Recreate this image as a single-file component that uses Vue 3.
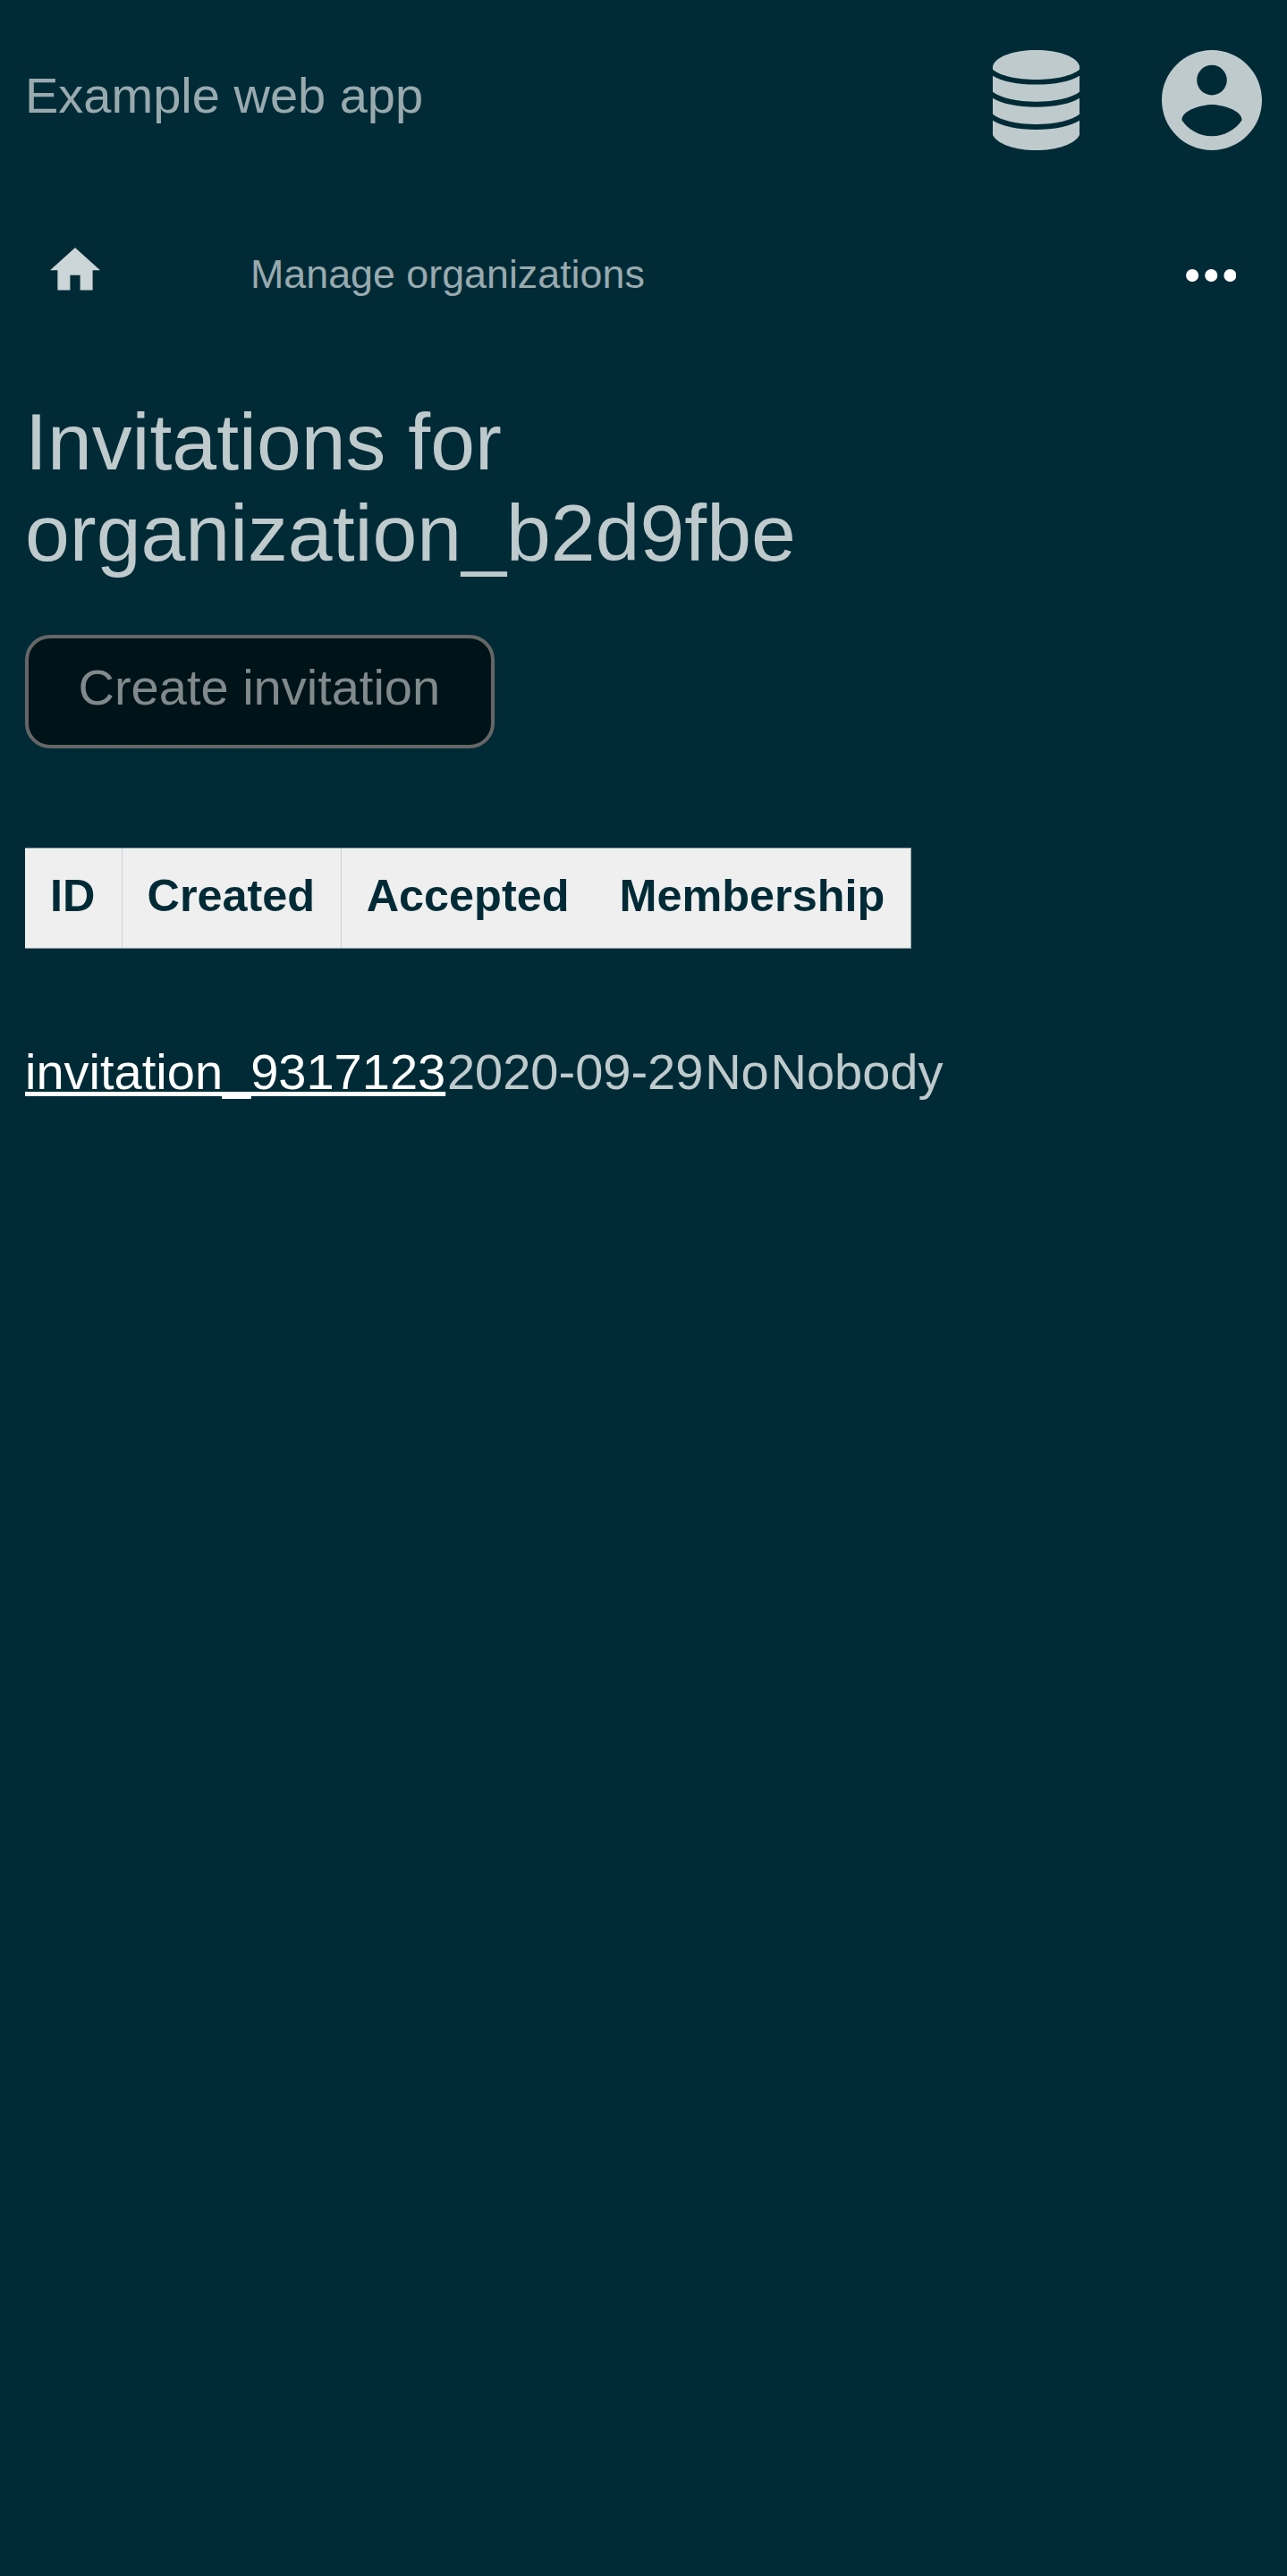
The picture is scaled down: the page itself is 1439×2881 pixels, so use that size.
<script setup>
const columns = ['ID', 'Created', 'Accepted', 'Membership']
const invitations = [
  { id: 'invitation_9317123', created: '2020-09-29', accepted: 'No', membership: 'Nobody' },
]
</script>

<template>
  <div class="page">
    <header class="top">
      <span class="brand">Example web app</span>
      <svg class="database" viewBox="0 0 97 112" aria-label="Administration">
        <path d="M0 18C3 7 24 0 48.500 0S94 7 97 18v3.700C89 28.500 70 33 48.500 33S8 28.500 0 21.700z" />
        <path d="M0 28.700C10 35 28 38.600 48.500 38.600S87 35 97 28.700v18.100C88 53.500 70 57.800 48.500 57.800S9 53.500 0 46.800z" />
        <path d="M0 53.700C10 60 28 63.700 48.500 63.700S87 60 97 53.700v18C88 78.500 70 83 48.500 83S9 78.500 0 71.700z" />
        <path d="M0 78.700C10 85 28 89 48.500 89S87 85 97 78.700v16.200C92 105 72 112 48.500 112S5 105 0 94.900z" />
      </svg>
      <svg class="account" viewBox="2 2 20 20" aria-label="Account">
        <path d="M12 2C6.480 2 2 6.480 2 12s4.480 10 10 10 10-4.480 10-10S17.520 2 12 2zm0 3c1.660 0 3 1.340 3 3s-1.340 3-3 3-3-1.340-3-3 1.340-3 3-3zm0 14.200c-2.500 0-4.710-1.280-6-3.220.030-1.990 4-3.080 6-3.080 1.990 0 5.970 1.090 6 3.080-1.290 1.940-3.500 3.220-6 3.220z" />
      </svg>
    </header>

    <nav class="nav">
      <svg class="home" viewBox="2 3 20 17" aria-label="Home">
        <path d="M10 20v-6h4v6h5v-8h3L12 3 2 12h3v8z" />
      </svg>
      <span class="crumb">Manage organizations</span>
      <svg class="more" viewBox="4 10 16 4" aria-label="More">
        <circle cx="6" cy="12" r="2" /><circle cx="12" cy="12" r="2" /><circle cx="18" cy="12" r="2" />
      </svg>
    </nav>

    <main>
      <h1>Invitations for<br />organization_b2d9fbe</h1>
      <button type="button">Create invitation</button>
      <div class="thead">
        <div v-for="name in columns" :key="name" class="th">{{ name }}</div>
      </div>
      <div v-for="item in invitations" :key="item.id" class="row">
        <a>{{ item.id }}</a>
        <span>{{ item.created }}</span>
        <span>{{ item.accepted }}</span>
        <span>{{ item.membership }}</span>
      </div>
    </main>
  </div>
</template>

<style>
body {
  margin: 0;
  background: #002b36;
}
</style>

<style scoped>
.page {
  box-sizing: border-box;
  min-height: 2881px;
  padding: 56px 28px 0;
  background: #002b36;
  color: #bfcacd;
  font-family: "Liberation Sans", Arial, sans-serif;
  font-size: 56px;
  line-height: 64px;
}
svg {
  display: block;
  fill: #bfcacd;
}
.top {
  display: flex;
  height: 112px;
}
.brand {
  flex: 1;
  margin-top: 19px;
  color: #99aaaf;
}
.database {
  width: 97px;
  height: 112px;
  margin-right: 92px;
}
.account {
  width: 112px;
  height: 112px;
}
.nav {
  display: flex;
  align-items: flex-start;
  height: 112px;
  margin-top: 84px;
  padding: 0 29px 0 28px;
}
.home {
  width: 56px;
  height: 47.6px;
  margin-top: 25px;
  fill: #ccd5d7;
}
.crumb {
  flex: 1;
  margin: 28px 0 0 168px;
  color: #99aaaf;
  font-size: 44.8px;
  line-height: 52px;
}
.more {
  width: 56.5px;
  height: 14.1px;
  margin-top: 49px;
  fill: #fff;
}
h1 {
  margin: 79px 0 0;
  font-size: 89.6px;
  font-weight: 400;
  line-height: 102px;
}
button {
  display: block;
  box-sizing: border-box;
  height: 127px;
  margin: 63px 0 0;
  padding: 23px 56.5px 32px 55.5px;
  border: 4px solid #666;
  border-radius: 28px;
  background: #001318;
  color: #80898b;
  font: inherit;
}
.thead {
  display: flex;
  width: max-content;
  box-sizing: border-box;
  height: 113px;
  margin-top: 111px;
  border: solid #8f9fa4;
  border-width: 1px 1px 1px 0;
  background: #efefef;
  color: #002b36;
  font-size: 50.4px;
  font-weight: 700;
  line-height: 58px;
}
.th {
  padding: 24px 28px 0;
}
.th:nth-child(-n + 2) {
  border-right: 1px solid #cbd2d3;
}
.th:nth-child(1) {
  padding-right: 29.6px;
}
.th:nth-child(2) {
  padding-left: 27.5px;
  padding-right: 28.5px;
}
.th:nth-child(4) {
  padding-right: 28.5px;
}
.row {
  display: flex;
  gap: 1.75px;
  margin-top: 106px;
}
.row a {
  color: #fff;
  text-decoration: underline;
  text-decoration-skip-ink: none;
}
</style>
